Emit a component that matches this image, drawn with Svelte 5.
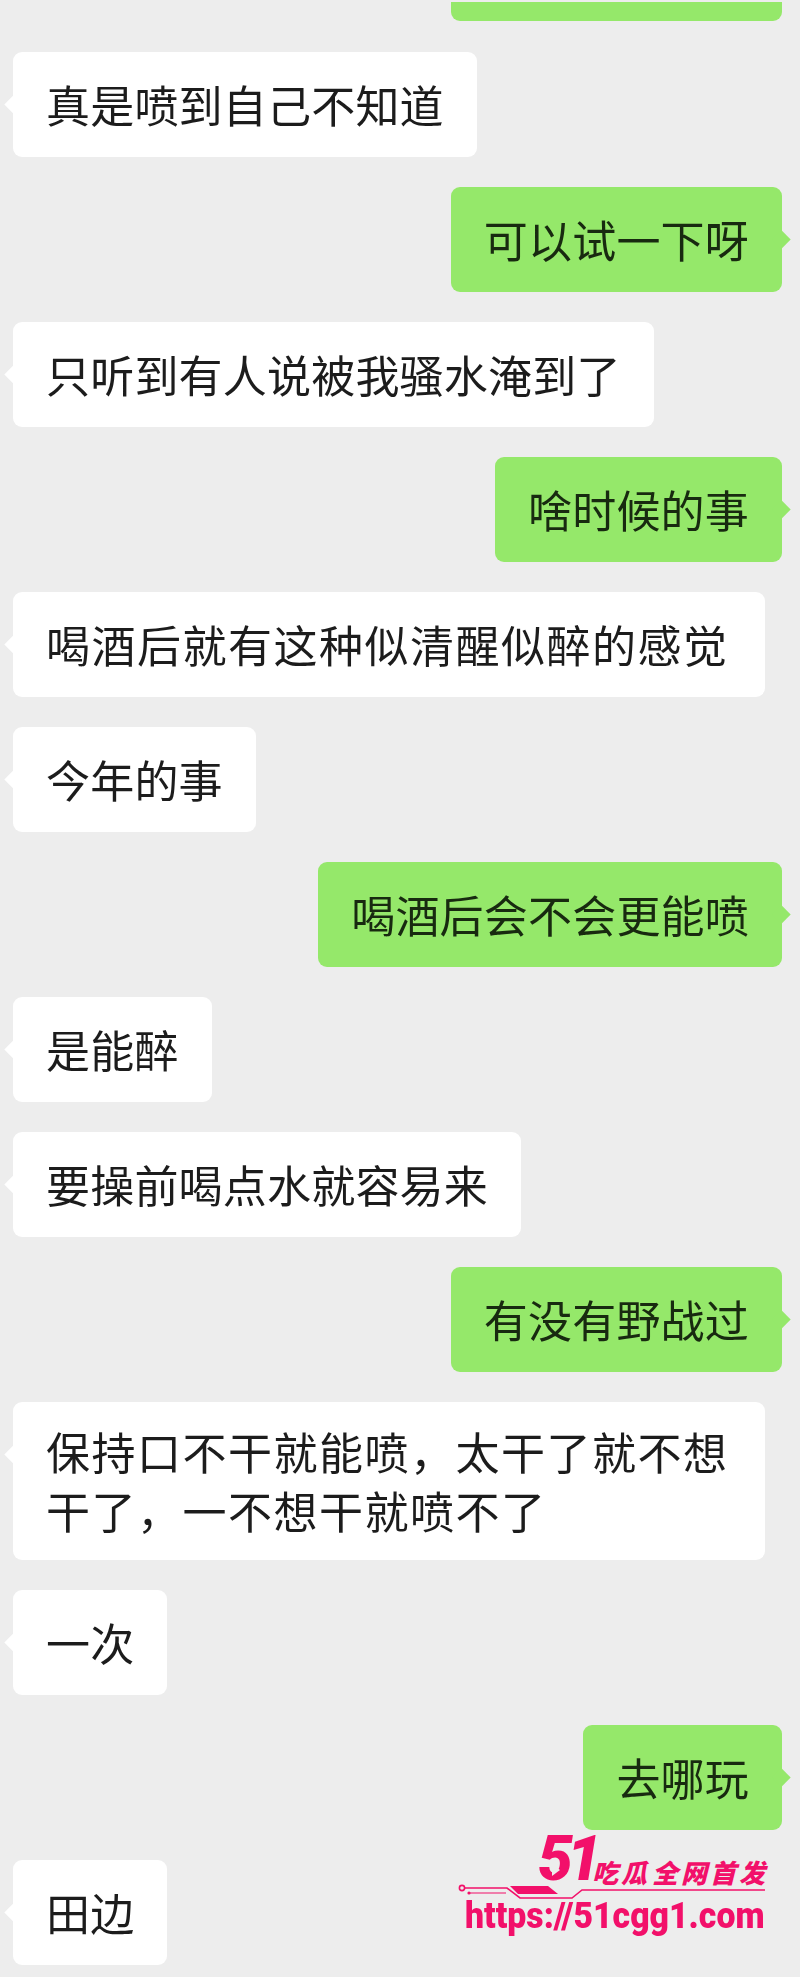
<script>
	// me: green bubble on the right, otherwise white on the left
	const messages = [
		{ text: '真是喷到自己不知道' },
		{ text: '可以试一下呀', me: true },
		{ text: '只听到有人说被我骚水淹到了' },
		{ text: '啥时候的事', me: true },
		{ text: '喝酒后就有这种似清醒似醉的感觉', wide: true },
		{ text: '今年的事' },
		{ text: '喝酒后会不会更能喷', me: true },
		{ text: '是能醉' },
		{ text: '要操前喝点水就容易来' },
		{ text: '有没有野战过', me: true },
		{ text: '保持口不干就能喷，太干了就不想干了，一不想干就喷不了', wide: true },
		{ text: '一次' },
		{ text: '去哪玩', me: true },
		{ text: '田边' }
	];
</script>

<div class="chat">
	<div class="bubble me cut"></div>
	{#each messages as m}
		<div class="bubble" class:me={m.me} class:wide={m.wide}>
			<span class="text">{m.text}</span>
		</div>
	{/each}

	<div class="mark">
		<div class="mark-top">
			<span class="fifty">51</span>
			<span class="brand">吃瓜</span>
			<span class="brand slogan">全网首发</span>
		</div>
		<svg class="play" width="8" height="12" viewBox="0 0 8 12">
			<path d="M0 0L8 6L0 12Z" fill="#ededed" />
		</svg>
		<svg class="circuit" width="310" height="16" viewBox="0 0 310 16">
			<circle cx="4" cy="4" r="2.6" fill="none" stroke="#f2106a" stroke-width="1.6" />
			<path d="M7 4H49L62 14H114L124 6H307" fill="none" stroke="#f2106a" stroke-width="1.6" />
			<path d="M12 9H48" fill="none" stroke="#f2106a" stroke-width="1.2" />
			<circle cx="11" cy="9" r="1.6" fill="#f2106a" />
			<path d="M52 2H90L100 10H60Z" fill="#f2106a" />
		</svg>
		<div class="url">https://51cgg1.com</div>
	</div>
</div>

<style>
	:global(body) {
		background: #ededed;
	}

	.chat {
		position: relative;
		box-sizing: border-box;
		width: 800px;
		height: 1977px;
		padding: 2px 18px 0 13px;
		display: flex;
		flex-direction: column;
		align-items: flex-start;
		gap: 30px;
		background: #ededed;
		overflow: hidden;
		font-family: 'Noto Sans CJK SC', sans-serif;
	}

	.bubble {
		position: relative;
		box-sizing: border-box;
		min-height: 105px;
		max-width: 752px;
		padding: 20px 33px;
		display: flex;
		align-items: center;
		background: #fff;
		border-radius: 9px;
		color: #1c1c1c;
		font-size: 44px;
		line-height: 59px;
		letter-spacing: 0.2px;
	}

	.bubble::before {
		content: '';
		position: absolute;
		top: 46px;
		left: -6px;
		width: 13px;
		height: 13px;
		background: inherit;
		transform: rotate(45deg);
	}

	.text {
		filter: blur(0.5px);
	}

	.me {
		align-self: flex-end;
		background: #95e86a;
		color: #182a10;
	}

	.me::before {
		left: auto;
		right: -6px;
	}

	.wide {
		width: 752px;
		letter-spacing: 1.5px;
	}

	.cut {
		width: 331px;
		min-height: 19px;
		height: 19px;
		padding: 0;
		border-radius: 0 0 9px 9px;
		margin-bottom: 1px;
	}

	.cut::before {
		display: none;
	}

	/* site watermark lying over the chat */
	.mark {
		position: absolute;
		left: 458px;
		top: 1838px;
		width: 330px;
		color: #f2106a;
		font-style: italic;
	}

	.mark-top {
		display: flex;
		align-items: flex-end;
		height: 47px;
		padding-left: 80px;
		line-height: 1;
		white-space: nowrap;
	}

	.fifty {
		width: 54px;
		font-family: Roboto, sans-serif;
		font-weight: 900;
		font-size: 62px;
		letter-spacing: -6px;
		margin-bottom: -5px;
	}

	.play {
		position: absolute;
		left: 94px;
		top: 26px;
	}

	.brand {
		font-weight: 900;
		font-size: 26px;
		letter-spacing: 3px;
	}

	.slogan {
		margin-left: 2px;
	}

	.circuit {
		display: block;
		margin-top: -1px;
	}

	.url {
		margin: -3px 0 0 7px;
		font-family: Roboto, sans-serif;
		font-style: normal;
		font-weight: 900;
		font-size: 37px;
		line-height: 38px;
		white-space: nowrap;
		transform: scaleX(0.913);
		transform-origin: left center;
	}
</style>
